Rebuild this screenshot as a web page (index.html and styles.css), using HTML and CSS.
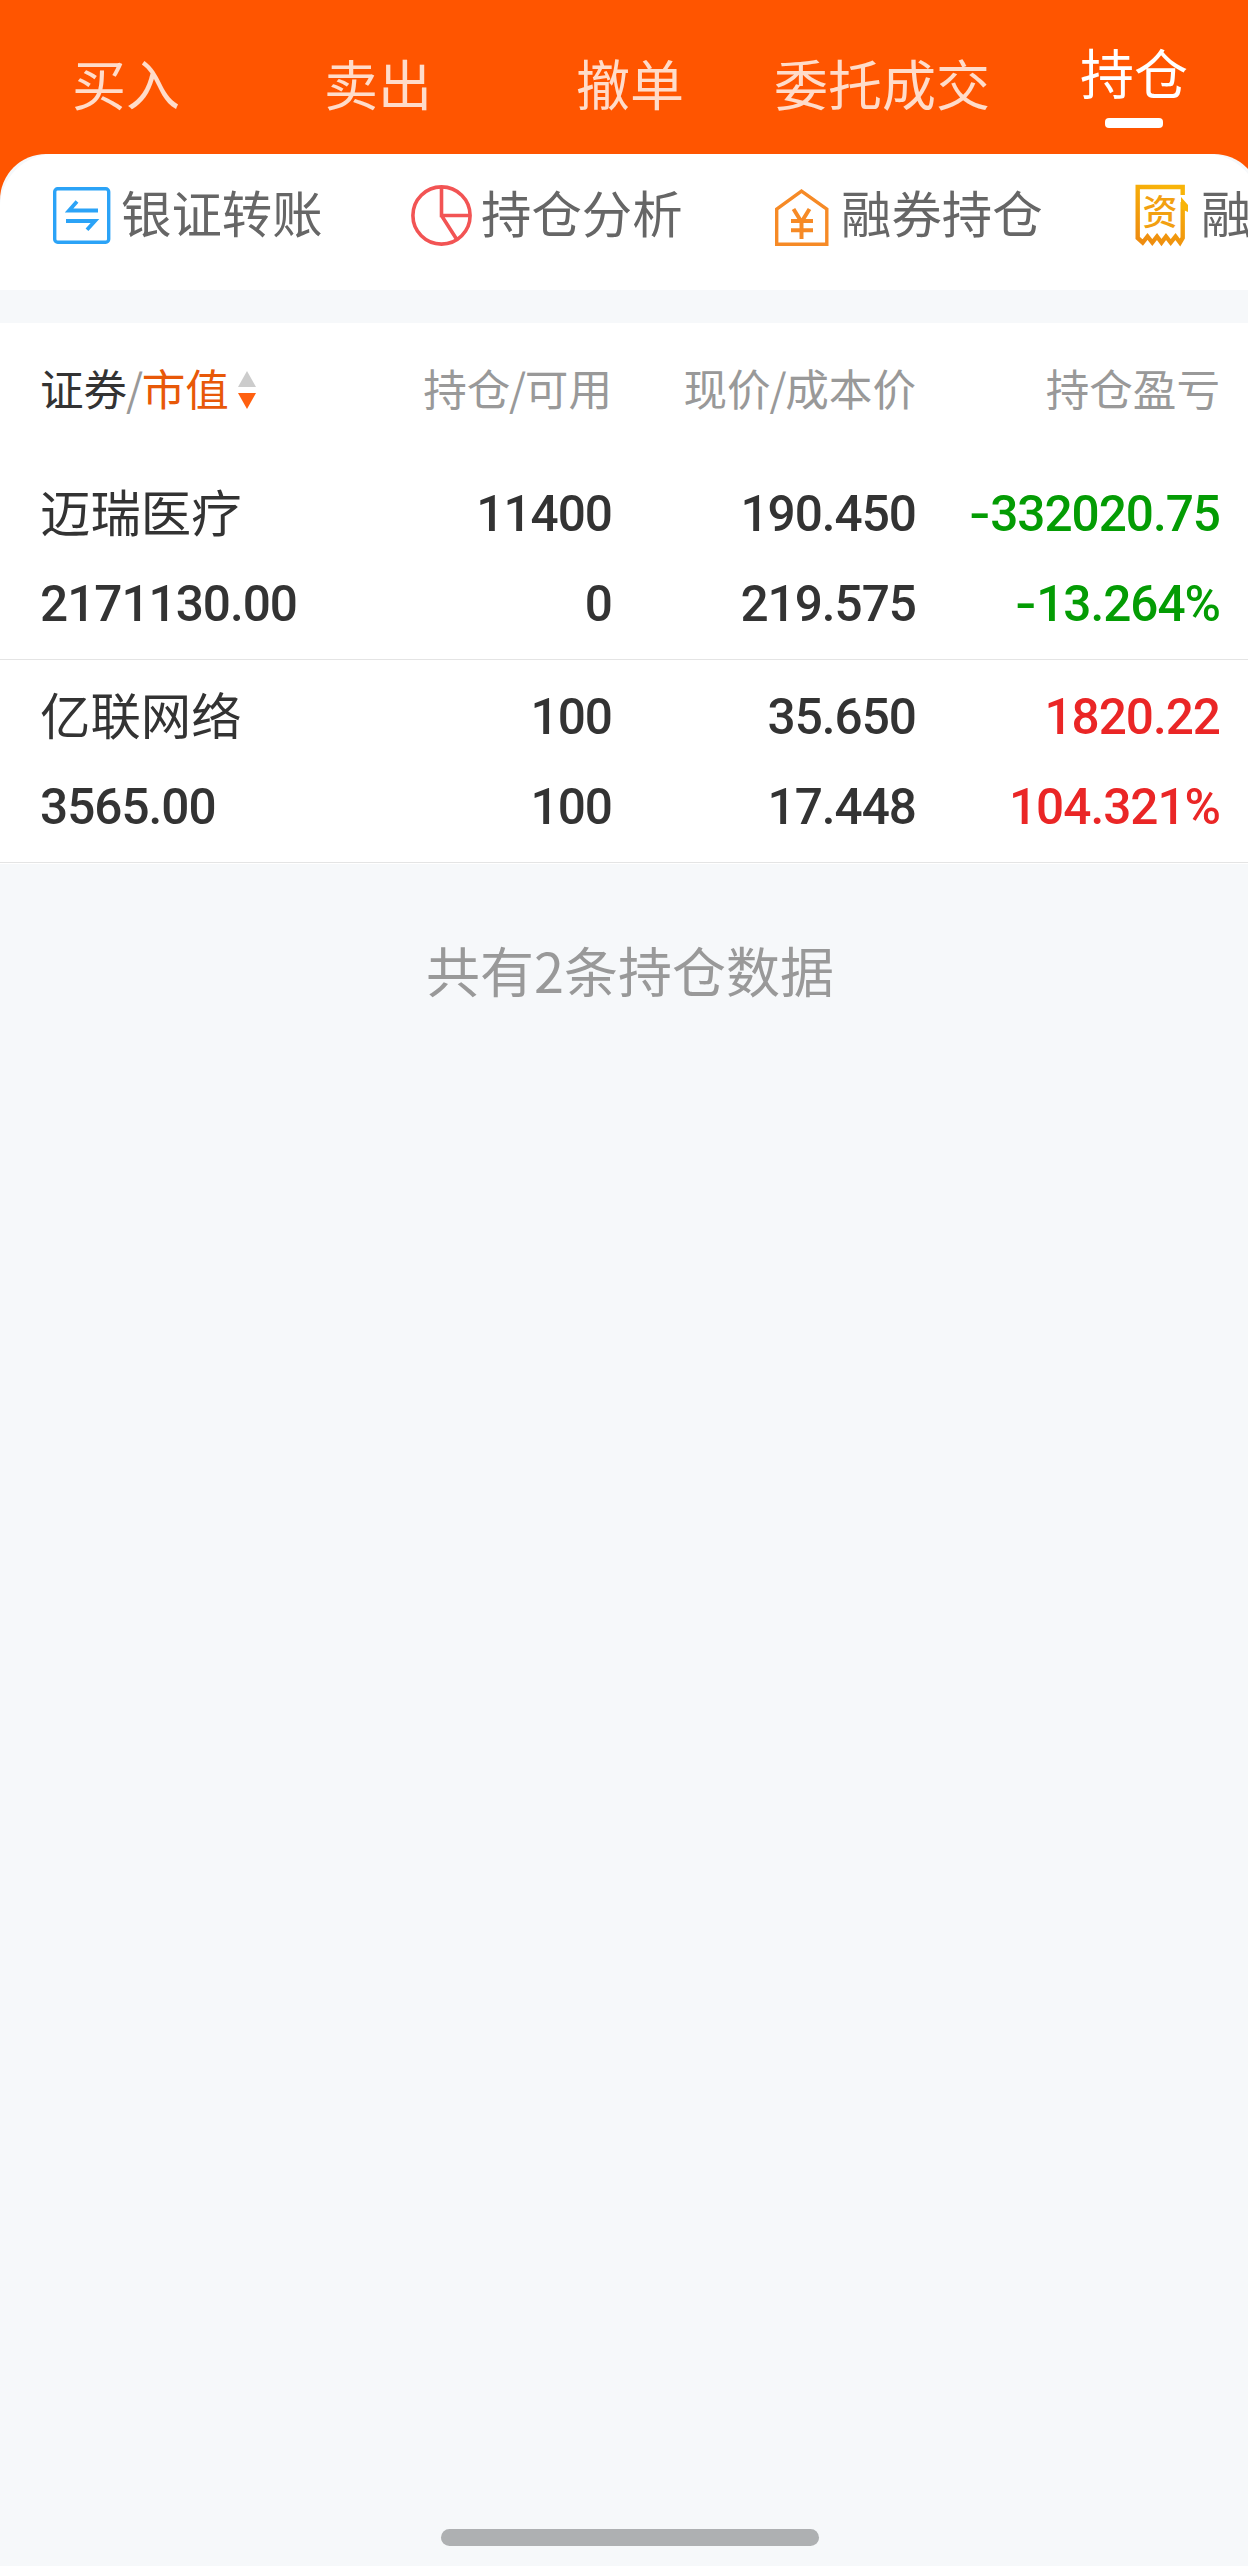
FILE: index.html
```html
<!DOCTYPE html>
<html lang="zh-CN">
<head>
<meta charset="utf-8">
<title>持仓</title>
<link rel="stylesheet" href="styles.css">
</head>
<body>
<div class="screen">
  <nav class="tabs">
    <a class="tab">买入</a>
    <a class="tab">卖出</a>
    <a class="tab">撤单</a>
    <a class="tab">委托成交</a>
    <a class="tab tab-active">持仓</a>
  </nav>

  <div class="sheet">
    <div class="sheet-edge">
    <div class="tools">
      <a class="tool">
        <svg class="tool-icon" viewBox="0 0 66 66" fill="none" stroke="#2ba3f7" stroke-width="3.4">
          <rect x="6.7" y="6.7" width="54" height="53.6" rx="3"/>
          <path d="M50 28.500H21L29 19.500M18 39H47L39 47.800" stroke-width="3.8"/>
        </svg>
        <span>银证转账</span>
      </a>
      <a class="tool">
        <svg class="tool-icon" viewBox="0 0 66 66" fill="none" stroke="#f25454" stroke-width="3.6">
          <circle cx="33.500" cy="33.500" r="28.600"/>
          <path d="M33.500 5V33.500H62M33.500 33.500L48.800 57.500"/>
        </svg>
        <span>持仓分析</span>
      </a>
      <a class="tool">
        <svg class="tool-icon" viewBox="0 0 66 66" fill="none" stroke="#f68a26" stroke-width="3.4">
          <path d="M8.700 27.200L33.500 9.200L58.800 27.200V62.300H8.700Z"/>
          <path d="M25.500 27L33.500 40L41.500 27M33.500 39V57M23 39H45M23 48.200H45" stroke-width="4"/>
        </svg>
        <span>融券持仓</span>
      </a>
      <a class="tool">
        <svg class="tool-icon" viewBox="0 0 66 66" fill="none">
          <defs>
            <linearGradient id="gold" gradientUnits="userSpaceOnUse" x1="50" y1="10" x2="25" y2="64">
              <stop offset="0" stop-color="#f8b408"/>
              <stop offset="1" stop-color="#ee8c10"/>
            </linearGradient>
          </defs>
          <path d="M54.700 13V5H9.700V56L14.700 60.500L19.500 54.500L24.300 60.500L29 54.500L33.500 60.500L38 54.500L42.700 60.500L47.500 54.500L52 60.500L54.700 56V20" stroke="url(#gold)" stroke-width="4.400"/>
          <path d="M53 15L60 23V30L53 27Z" fill="#f8b408"/>
          <text class="tool-glyph" x="32" y="43" text-anchor="middle">资</text>
        </svg>
        <span>融资持仓</span>
      </a>
    </div>
    </div>
  </div>

  <div class="table">
    <div class="row head">
      <div class="cell sort"><span class="dark">证券</span><span class="slash">/</span><span class="accent">市值</span>
        <svg class="arrows" viewBox="0 0 18 40"><path d="M9 1L18 17H0Z" fill="#ccc"/><path d="M0 23H18L9 39Z" fill="#ff6010"/></svg>
      </div>
      <div class="cell">持仓<span class="slash">/</span>可用</div>
      <div class="cell">现价<span class="slash">/</span>成本价</div>
      <div class="cell">持仓盈亏</div>
    </div>
    <div class="row">
      <div class="cell name">迈瑞医疗</div>
      <div class="cell">11400</div>
      <div class="cell">190.450</div>
      <div class="cell down"><span class="minus">-</span>332020.75</div>
      <div class="cell">2171130.00</div>
      <div class="cell">0</div>
      <div class="cell">219.575</div>
      <div class="cell down"><span class="minus">-</span>13.264%</div>
    </div>
    <div class="row">
      <div class="cell name">亿联网络</div>
      <div class="cell">100</div>
      <div class="cell">35.650</div>
      <div class="cell up">1820.22</div>
      <div class="cell">3565.00</div>
      <div class="cell">100</div>
      <div class="cell">17.448</div>
      <div class="cell up">104.321%</div>
    </div>
  </div>

  <p class="summary">共有2条持仓数据</p>
  <div class="home-bar"></div>
</div>
</body>
</html>
```
FILE: styles.css
```css
* {
  box-sizing: border-box;
}

body {
  margin: 0;
  overflow: hidden;
  background: #f6f8fa;
  font-family: Roboto, "Noto Sans CJK SC", sans-serif;
}

/* The canvas is slightly wider than the viewport and is clipped on the right. */
.screen {
  display: flex;
  flex-direction: column;
  width: 1260px;
  height: 2566px;
}

.tabs {
  display: grid;
  grid-template-columns: repeat(5, 252px);
  height: 154px;
  padding-top: 43px;
  background: #ff5500;
}

.tab {
  display: flex;
  flex-direction: column;
  align-items: center;
  font-family: "Noto Sans CJK SC", sans-serif;
  font-size: 54px;
  line-height: 80px;
  color: #ffdcca;
}

.tab-active {
  margin-top: -11px;
  color: #fff;
}

.tab-active::after {
  content: "";
  width: 58px;
  height: 10px;
  margin-top: 6px;
  border-radius: 4px;
  background: #fff;
}

.sheet {
  height: 136px;
  background: #ff5500;
}

.sheet-edge {
  border-radius: 46px 46px 0 0;
  background: #f6f8fa;
}

.tools {
  display: grid;
  grid-template-columns: repeat(4, 360px);
  height: 136px;
  padding: 28px 0 0 48px;
  overflow: hidden;
  border-radius: 54px 54px 0 0;
  background: #fff;
}

.tool {
  display: flex;
  gap: 7px;
  height: 66px;
  font-family: "Noto Sans CJK SC", sans-serif;
  font-size: 50.4px;
  line-height: 59px;
  white-space: nowrap;
  color: #666;
}

.tool-icon {
  flex: none;
  width: 66px;
  height: 66px;
}

.tool-glyph {
  font-size: 35px;
  font-weight: 500;
  fill: #f2a010;
}

.table {
  margin-top: 33px;
  border-bottom: 1px solid #fff;
  background: #fff;
}

.row {
  display: grid;
  grid-template-columns: 268px 304px 304px 304px;
  grid-auto-rows: 90px;
  padding: 11px 40px;
  border-bottom: 1px solid #e4e4e4;
  font-size: 49.5px;
  font-weight: 500;
  line-height: 93px;
  letter-spacing: -1px;
  white-space: nowrap;
  color: #333;
}

.cell {
  text-align: right;
}

.cell:nth-child(4n + 1) {
  text-align: left;
}

.name {
  font-family: "Noto Sans CJK SC", sans-serif;
  font-size: 50.4px;
  font-weight: 400;
  line-height: 86px;
  letter-spacing: 0;
}

.head {
  height: 134px;
  padding-top: 22px;
  border-bottom: 0;
  font-family: "Noto Sans CJK SC", sans-serif;
  font-size: 43.6px;
  font-weight: 400;
  line-height: 85px;
  letter-spacing: 0;
  color: #999;
}

.sort {
  display: flex;
  align-items: flex-start;
}

.slash {
  margin: 0 -1.3px;
}

.dark {
  color: #333;
}

.accent {
  color: #e85808;
}

.arrows {
  width: 18px;
  height: 40px;
  margin: 25px 0 0 9px;
}

.down {
  color: #049c04;
}

.up {
  color: #ea2626;
}

.minus {
  font-family: Inter, sans-serif;
  line-height: 1;
}

.summary {
  margin: 66px 0 0;
  font-family: "Noto Sans CJK SC", sans-serif;
  font-size: 54px;
  line-height: 80px;
  text-align: center;
  color: #999;
}

.home-bar {
  align-self: center;
  width: 378px;
  height: 17px;
  margin-top: auto;
  margin-bottom: 20px;
  border-radius: 9px;
  background: #aeb0b2;
}
```
